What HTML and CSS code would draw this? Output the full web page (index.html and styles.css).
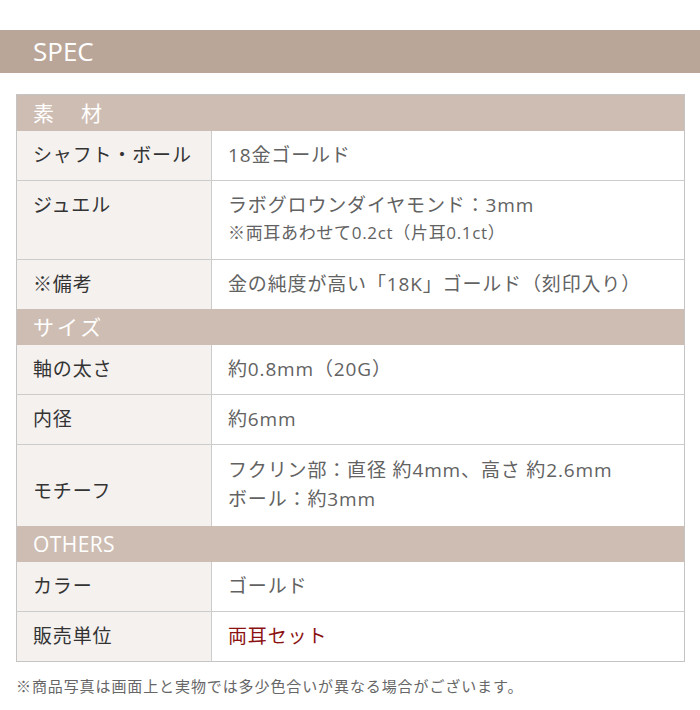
FILE: index.html
```html
<!DOCTYPE html>
<html lang="ja">
<head>
<meta charset="utf-8">
<link rel="stylesheet" href="styles.css">
</head>
<body>
<div class="page">
  <h2 class="bar">SPEC</h2>
  <table class="spec">
    <colgroup><col class="c-label"><col></colgroup>
    <tr class="sec"><th colspan="2" class="ja">素　材</th></tr>
    <tr><td class="lbl">シャフト・ボール</td><td class="val">18金ゴールド</td></tr>
    <tr><td class="lbl top">ジュエル</td><td class="val jewel">ラボグロウンダイヤモンド：3mm<div class="sub">※両耳あわせて0.2ct（片耳0.1ct）</div></td></tr>
    <tr><td class="lbl">※備考</td><td class="val">金の純度が高い「18K」ゴールド（刻印入り）</td></tr>
    <tr class="sec"><th colspan="2" class="ja">サイズ</th></tr>
    <tr><td class="lbl">軸の太さ</td><td class="val">約0.8mm（20G）</td></tr>
    <tr><td class="lbl">内径</td><td class="val">約6mm</td></tr>
    <tr><td class="lbl motif">モチーフ</td><td class="val two">フクリン部：直径 約4mm、高さ 約2.6mm<br>ボール：約3mm</td></tr>
    <tr class="sec"><th colspan="2">OTHERS</th></tr>
    <tr><td class="lbl">カラー</td><td class="val">ゴールド</td></tr>
    <tr><td class="lbl">販売単位</td><td class="val red">両耳セット</td></tr>
  </table>
  <p class="note">※商品写真は画面上と実物では多少色合いが異なる場合がございます。</p>
</div>
</body>
</html>
```
FILE: styles.css
```css
html, body {
  margin: 0;
  padding: 0;
  background: #fff;
}
body {
  font-family: "Open Sans", "Noto Sans CJK JP", sans-serif;
  color: #555;
}
.page {
  padding-top: 30px;
}
.bar {
  margin: 0;
  height: 43px;
  background: #baa698;
  color: #fff;
  font-weight: 400;
  font-size: 26px;
  line-height: 43px;
  padding-left: 33px;
  letter-spacing: 0;
}
.spec {
  margin: 21px 15px 0 16px;
  width: 669px;
  border-collapse: collapse;
  border: 1px solid #c4c4c4;
  font-size: 19px;
  letter-spacing: 0.85px;
}
.c-label {
  width: 195px;
}
.sec th {
  background: #cebdb3;
  color: #fff;
  text-align: left;
  font-weight: 400;
  font-size: 21px;
  height: 36px;
  padding: 0 0 0 16px;
  line-height: 36px;
  letter-spacing: 0.02em;
}
.sec th.ja {
  letter-spacing: 0.14em;
}
.spec td {
  border-top: 1px solid #cccccc;
  padding: 10px 16px;
  line-height: 29px;
  vertical-align: middle;
}
.sec + tr td {
  border-top: none;
}
.lbl {
  background: #f4f1ef;
  color: #333;
  border-right: 1px solid #cccccc;
  padding-left: 16px;
}
.lbl.top {
  vertical-align: top;
}
.lbl.motif {
  padding-top: 22px;
}
.val {
  color: #626262;
  padding-left: 17px;
}
.val.jewel {
  padding-bottom: 14px;
}
.sub {
  font-size: 17px;
  line-height: 24px;
  margin-top: 1px;
  letter-spacing: 0.04em;
}
.val.two {
  padding-top: 11px;
  padding-bottom: 12px;
}
.red {
  color: #8b1111;
}
.note {
  margin: 13px 0 0 16px;
  font-size: 15px;
  color: #666;
  letter-spacing: 0.06em;
  line-height: 22px;
}
```
